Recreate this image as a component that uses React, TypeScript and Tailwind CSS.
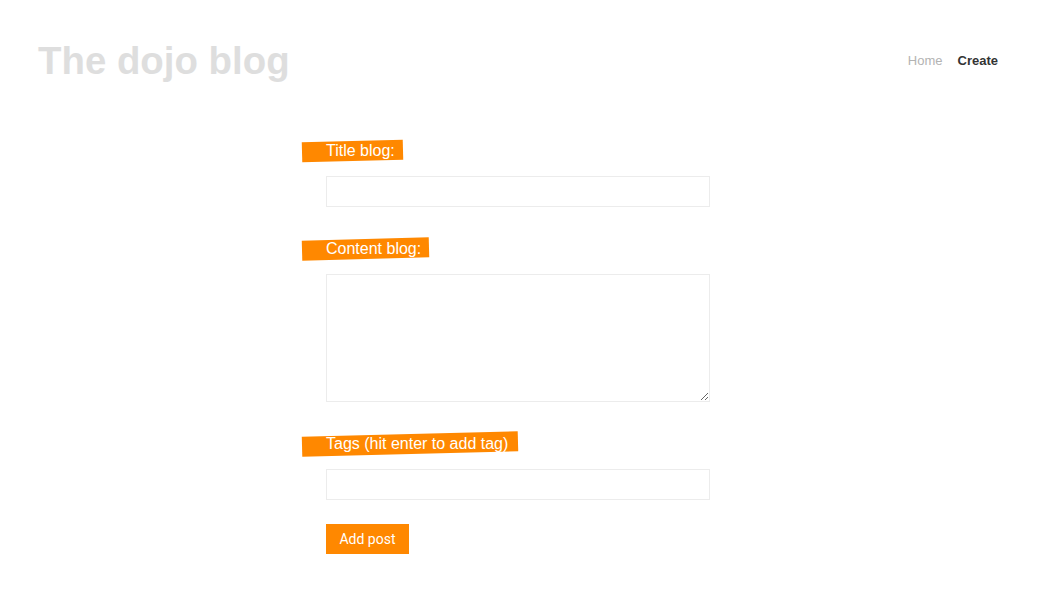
import React from "react";

function Label({ children, className = "" }: { children: React.ReactNode; className?: string }) {
  return (
    <label
      className={`relative self-start inline-block text-white text-[16px] leading-[20px] h-[20px] pl-6 ${className}`}
    >
      <span className="absolute inset-0 bg-[#ff8800] -rotate-[1.5deg]" />
      <span className="relative">{children}</span>
    </label>
  );
}

export default function App() {
  const input =
    "block ml-6 w-[384px] h-[31px] border border-[#ececec] bg-white outline-none px-2";
  return (
    <div
      className="min-h-[597px] bg-white"
      style={{ fontFamily: '"Liberation Sans", Arial, sans-serif' }}
    >
      <header className="flex items-center justify-between pt-[39px] pl-[38px] pr-[63px] h-[82px]">
        <h1 className="text-[38.4px] font-bold text-[#dedede] leading-[43px]">
          The dojo blog
        </h1>
        <nav className="flex gap-[15px] text-[13px]">
          <a className="text-[#b3b3b3]">Home</a>
          <a className="text-[#333] font-bold">Create</a>
        </nav>
      </header>
      <form className="flex flex-col ml-[302px] mt-[59px]">
        <Label className="pr-2">Title blog:</Label>
        <input className={`${input} mt-[15px]`} />
        <Label className="mt-[32px] pr-2">Content blog:</Label>
        <textarea className={`${input} mt-[15px] h-[128px]`} />
        <Label className="mt-[32px] pr-[10px]">Tags (hit enter to add tag)</Label>
        <input className={`${input} mt-[15px]`} />
        <button
          type="button"
          className="ml-6 mt-[24px] w-[83px] h-[30px] bg-[#ff8800] text-white text-[14px] self-start"
          style={{ fontFamily: "Roboto, sans-serif" }}
        >
          Add post
        </button>
      </form>
    </div>
  );
}
